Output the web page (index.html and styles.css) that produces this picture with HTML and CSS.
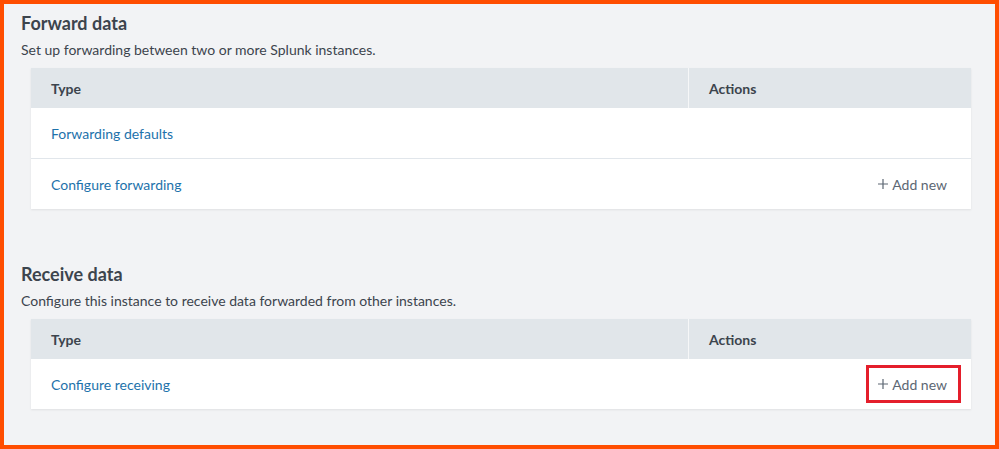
FILE: index.html
```html
<!DOCTYPE html>
<html>
<head>
<meta charset="utf-8">
<link rel="stylesheet" href="styles.css">
</head>
<body>
<div class="frame">
  <section class="section">
    <h2 class="title">Forward data</h2>
    <p class="desc">Set up forwarding between two or more Splunk instances.</p>
    <div class="table">
      <div class="row head">
        <div class="cell type">Type</div>
        <div class="cell actions">Actions</div>
      </div>
      <div class="row">
        <div class="cell type"><a class="link">Forwarding defaults</a></div>
        <div class="cell actions"></div>
      </div>
      <div class="row">
        <div class="cell type"><a class="link">Configure forwarding</a></div>
        <div class="cell actions"><span class="add"><svg class="plus" width="10" height="10" viewBox="0 0 10 10"><path d="M5 0V10M0 5H10" stroke="#5c6773" stroke-width="1.2" fill="none"/></svg>Add new</span></div>
      </div>
    </div>
  </section>
  <section class="section second">
    <h2 class="title">Receive data</h2>
    <p class="desc">Configure this instance to receive data forwarded from other instances.</p>
    <div class="table">
      <div class="row head">
        <div class="cell type">Type</div>
        <div class="cell actions">Actions</div>
      </div>
      <div class="row">
        <div class="cell type"><a class="link">Configure receiving</a></div>
        <div class="cell actions"><span class="add highlight"><svg class="plus" width="10" height="10" viewBox="0 0 10 10"><path d="M5 0V10M0 5H10" stroke="#5c6773" stroke-width="1.2" fill="none"/></svg>Add new</span></div>
      </div>
    </div>
  </section>
</div>
</body>
</html>
```
FILE: styles.css
```css
html, body {
  margin: 0;
  padding: 0;
}
body {
  font-family: "Lato", "Open Sans", sans-serif;
  color: #3c444d;
}
.frame {
  box-sizing: border-box;
  width: 999px;
  height: 449px;
  border: 4px solid #ff4d00;
  background: #f2f3f5;
  padding: 0 24px 0 17px;
}
.section {
  padding-top: 8px;
}
.section.second {
  padding-top: 54px;
}
.title {
  margin: 0;
  font-size: 18px;
  line-height: 23px;
  font-weight: 700;
  color: #3c444d;
}
.desc {
  margin: 0;
  padding-top: 6px;
  font-size: 14px;
  line-height: 18px;
  color: #3c444d;
}
.table {
  margin: 9px 0 0 10px;
  background: #fff;
  box-shadow: 0 1px 2px rgba(0, 0, 0, 0.08);
}
.row {
  display: grid;
  grid-template-columns: 657px 1fr;
  height: 50px;
  border-top: 1px solid #e1e6eb;
  align-items: center;
}
.row.head {
  height: 40px;
  border-top: none;
  background: #e1e6ea;
  font-weight: 700;
}
.row.head + .row {
  border-top: none;
}
.cell {
  padding-left: 20px;
  height: 100%;
  display: flex;
  align-items: center;
  font-size: 14px;
}
.row.head .cell.actions {
  border-left: 1px solid #f6f7f8;
}
.cell.actions {
  justify-content: flex-end;
  padding-right: 24px;
}
.row.head .cell.actions {
  justify-content: flex-start;
}
.link {
  color: #1d72ab;
}
.add {
  color: #5c6773;
  position: relative;
  display: inline-flex;
  align-items: center;
}
.plus {
  margin-right: 4px;
}
.highlight::after {
  content: "";
  position: absolute;
  left: -12px;
  right: -14px;
  top: -11px;
  bottom: -10px;
  border: 3px solid #e41e2b;
}
```
